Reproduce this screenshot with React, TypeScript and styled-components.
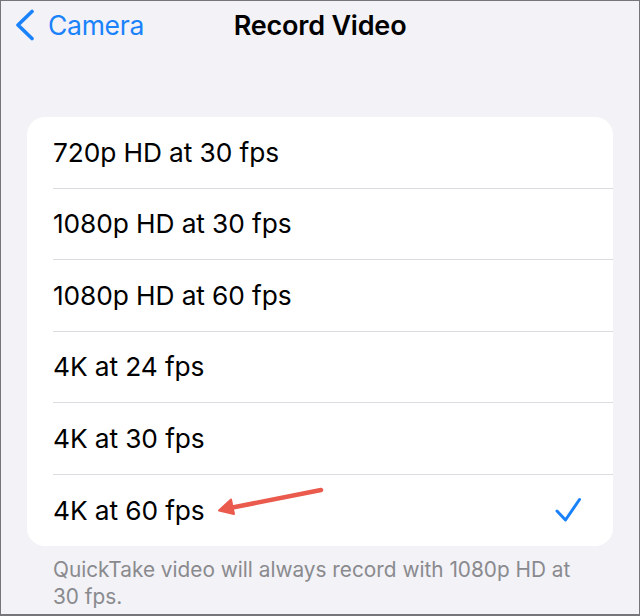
import styled, { createGlobalStyle } from "styled-components";

const GlobalStyle = createGlobalStyle`
  html, body {
    margin: 0;
    padding: 0;
    background: #f2f2f7;
  }
  * {
    box-sizing: border-box;
  }
`;

const options = [
  "720p HD at 30 fps",
  "1080p HD at 30 fps",
  "1080p HD at 60 fps",
  "4K at 24 fps",
  "4K at 30 fps",
  "4K at 60 fps",
];

const selected = "4K at 60 fps";

function App() {
  return (
    <>
      <GlobalStyle />
      <Screen>
        <NavBar>
          <BackButton>
            <svg width="20" height="32" viewBox="0 0 20 32">
              <path
                d="M17 2.5 L3 16 L17 29.5"
                fill="none"
                stroke="#1a82fb"
                strokeWidth="3.6"
                strokeLinecap="round"
                strokeLinejoin="round"
              />
            </svg>
            <span>Camera</span>
          </BackButton>
          <Title>Record Video</Title>
          <span />
        </NavBar>

        <Card>
          {options.map((label, i) => (
            <Row key={label} $last={i === options.length - 1}>
              <RowLabel>{label}</RowLabel>
              {label === selected && (
                <>
                  <Check width="26" height="26" viewBox="0 0 26 26">
                    <path
                      d="M2 14 L10.5 23 L24.5 2.5"
                      fill="none"
                      stroke="#1a82fb"
                      strokeWidth="3"
                      strokeLinecap="round"
                      strokeLinejoin="round"
                    />
                  </Check>
                  <Annotation width="110" height="30" viewBox="0 0 110 30">
                    <path
                      d="M104 3 L8 22"
                      stroke="#ea5a4d"
                      strokeWidth="4.5"
                      strokeLinecap="round"
                    />
                    <path
                      d="M2 23.5 L14 12.5 L17 27 Z"
                      fill="#ea5a4d"
                      stroke="#ea5a4d"
                      strokeWidth="2"
                      strokeLinejoin="round"
                    />
                  </Annotation>
                </>
              )}
            </Row>
          ))}
        </Card>

        <Footer>
          QuickTake video will always record with 1080p HD at 30 fps.
        </Footer>
      </Screen>
    </>
  );
}

const Screen = styled.div`
  width: 640px;
  height: 616px;
  display: flex;
  flex-direction: column;
  background: #f2f2f7;
  border: 1px solid #76767a;
  border-bottom-width: 2px;
  overflow: hidden;
  font-family: Inter, "Liberation Sans", sans-serif;
`;

const NavBar = styled.div`
  display: grid;
  grid-template-columns: 1fr auto 1fr;
  align-items: center;
  height: 48px;
  padding: 0 14px;
`;

const BackButton = styled.div`
  display: flex;
  align-items: center;
  gap: 13px;
  color: #1a82fb;
  font-size: 26.5px;
  letter-spacing: -0.3px;
`;

const Title = styled.div`
  font-size: 27px;
  font-weight: 600;
  color: #000;
  letter-spacing: -0.2px;
`;

const Card = styled.div`
  margin: 68px 26px 0 26px;
  background: #fff;
  border-radius: 18px;
  overflow: hidden;
`;

const Row = styled.div<{ $last: boolean }>`
  position: relative;
  display: flex;
  align-items: center;
  justify-content: space-between;
  height: 71.5px;
  margin-left: 26px;
  padding-right: 32px;
  border-bottom: ${(p) => (p.$last ? "none" : "1px solid #dcdce0")};
`;

const RowLabel = styled.span`
  font-size: 26.3px;
  color: #000;
  letter-spacing: -0.1px;
`;

const Check = styled.svg`
  display: block;
`;

const Annotation = styled.svg`
  position: absolute;
  left: 164px;
  top: 12px;
`;

const Footer = styled.p`
  margin: 11px 44px 0 52px;
  font-size: 20.8px;
  line-height: 26.5px;
  color: #8a8a8e;
`;

export default App;
